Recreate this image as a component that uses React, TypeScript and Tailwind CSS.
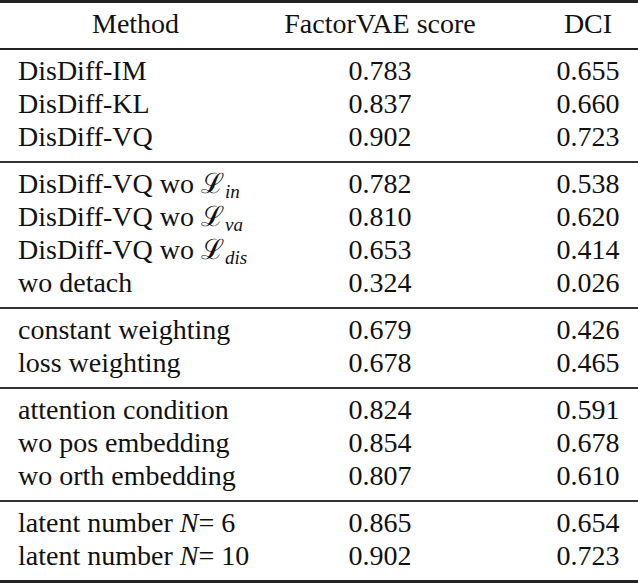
import type { ReactNode } from 'react'

type Row = { name: ReactNode; factor: string; dci: string }

const Loss = ({ sub }: { sub: string }) => (
  <>
    DisDiff-VQ wo <span>ℒ</span>
    <span className="italic text-[19px] leading-none align-[-5px] pl-[1px]">{sub}</span>
  </>
)

const Latent = ({ n }: { n: string }) => (
  <>
    latent number <span className="italic">N</span>= {n}
  </>
)

const groups: Row[][] = [
  [
    { name: 'DisDiff-IM', factor: '0.783', dci: '0.655' },
    { name: 'DisDiff-KL', factor: '0.837', dci: '0.660' },
    { name: 'DisDiff-VQ', factor: '0.902', dci: '0.723' },
  ],
  [
    { name: <Loss sub="in" />, factor: '0.782', dci: '0.538' },
    { name: <Loss sub="va" />, factor: '0.810', dci: '0.620' },
    { name: <Loss sub="dis" />, factor: '0.653', dci: '0.414' },
    { name: 'wo detach', factor: '0.324', dci: '0.026' },
  ],
  [
    { name: 'constant weighting', factor: '0.679', dci: '0.426' },
    { name: 'loss weighting', factor: '0.678', dci: '0.465' },
  ],
  [
    { name: 'attention condition', factor: '0.824', dci: '0.591' },
    { name: 'wo pos embedding', factor: '0.854', dci: '0.678' },
    { name: 'wo orth embedding', factor: '0.807', dci: '0.610' },
  ],
  [
    { name: <Latent n="6" />, factor: '0.865', dci: '0.654' },
    { name: <Latent n="10" />, factor: '0.902', dci: '0.723' },
  ],
]

const grid = 'grid grid-cols-[246px_232px_1fr_64px] px-[18px] h-[33px] leading-[33px] whitespace-nowrap'

export default function App() {
  return (
    <div className="w-[638px] h-[586px] bg-white text-[#111] text-[28px] font-['Liberation_Serif','DejaVu_Serif',serif]">
      <div className="border-t-[3px] border-b-2 border-[#222] pt-[4px] pb-[8px]">
        <div className={grid}>
          <div className="pl-[74px]">Method</div>
          <div className="text-center">FactorVAE score</div>
          <div />
          <div className="text-center">DCI</div>
        </div>
      </div>

      {groups.map((rows, gi) => (
        <div
          key={gi}
          className={
            gi === groups.length - 1
              ? 'border-b-[3px] border-[#222] pt-[4px] pb-[8px]'
              : 'border-b-2 border-[#333] pt-[4px] pb-[8px]'
          }
        >
          {rows.map((r, ri) => (
            <div key={ri} className={grid}>
              <div>{r.name}</div>
              <div className="text-center">{r.factor}</div>
              <div />
              <div className="text-center">{r.dci}</div>
            </div>
          ))}
        </div>
      ))}
    </div>
  )
}
